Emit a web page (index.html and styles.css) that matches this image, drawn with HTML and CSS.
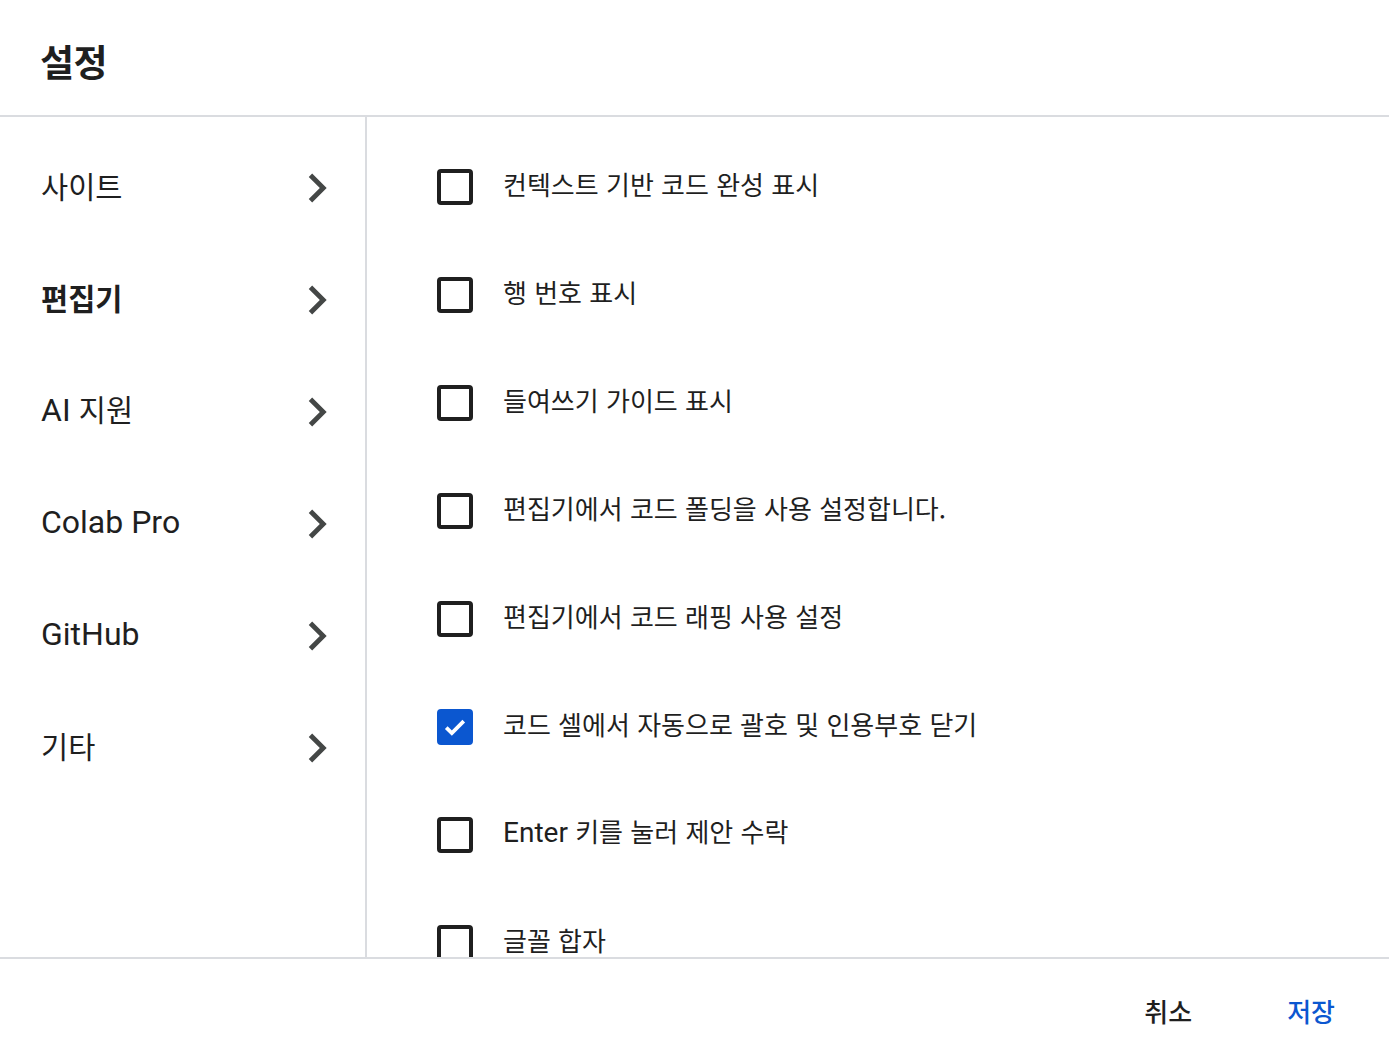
FILE: index.html
```html
<!DOCTYPE html>
<html lang="ko">
<head>
<meta charset="utf-8">
<title>설정</title>
<link rel="stylesheet" href="styles.css">
</head>
<body>
<div class="dialog">
  <header class="header"><h1 class="title">설정</h1></header>
  <div class="body">
    <nav class="sidebar">
      <div class="nav-item"><span class="nav-label">사이트</span><svg class="chev" viewBox="0 0 24 24"><path d="M10 6 8.59 7.41 13.17 12l-4.58 4.59L10 18l6-6z"/></svg></div>
      <div class="nav-item active"><span class="nav-label">편집기</span><svg class="chev" viewBox="0 0 24 24"><path d="M10 6 8.59 7.41 13.17 12l-4.58 4.59L10 18l6-6z"/></svg></div>
      <div class="nav-item"><span class="nav-label"><span class="en">AI</span> 지원</span><svg class="chev" viewBox="0 0 24 24"><path d="M10 6 8.59 7.41 13.17 12l-4.58 4.59L10 18l6-6z"/></svg></div>
      <div class="nav-item"><span class="nav-label"><span class="en">Colab Pro</span></span><svg class="chev" viewBox="0 0 24 24"><path d="M10 6 8.59 7.41 13.17 12l-4.58 4.59L10 18l6-6z"/></svg></div>
      <div class="nav-item"><span class="nav-label"><span class="en">GitHub</span></span><svg class="chev" viewBox="0 0 24 24"><path d="M10 6 8.59 7.41 13.17 12l-4.58 4.59L10 18l6-6z"/></svg></div>
      <div class="nav-item"><span class="nav-label">기타</span><svg class="chev" viewBox="0 0 24 24"><path d="M10 6 8.59 7.41 13.17 12l-4.58 4.59L10 18l6-6z"/></svg></div>
    </nav>
    <main class="content">
      <label class="opt"><span class="box"></span><span class="opt-label">컨텍스트 기반 코드 완성 표시</span></label>
      <label class="opt"><span class="box"></span><span class="opt-label">행 번호 표시</span></label>
      <label class="opt"><span class="box"></span><span class="opt-label">들여쓰기 가이드 표시</span></label>
      <label class="opt"><span class="box"></span><span class="opt-label">편집기에서 코드 폴딩을 사용 설정합니다.</span></label>
      <label class="opt"><span class="box"></span><span class="opt-label">편집기에서 코드 래핑 사용 설정</span></label>
      <label class="opt"><span class="box checked"><svg class="check" viewBox="0 0 24 24"><path d="M4.5 12.5l4.8 4.8L19.5 7"/></svg></span><span class="opt-label">코드 셀에서 자동으로 괄호 및 인용부호 닫기</span></label>
      <label class="opt"><span class="box"></span><span class="opt-label"><span class="en">Enter</span> 키를 눌러 제안 수락</span></label>
      <label class="opt"><span class="box"></span><span class="opt-label">글꼴 합자</span></label>
    </main>
  </div>
  <footer class="footer">
    <button class="btn cancel">취소</button>
    <button class="btn save">저장</button>
  </footer>
</div>
</body>
</html>
```
FILE: styles.css
```css
html, body {
  margin: 0;
  padding: 0;
  background: #fff;
}
body {
  font-family: "Roboto", "Noto Sans CJK KR", sans-serif;
  color: #1f1f1f;
}
.dialog {
  width: 1389px;
  height: 1062px;
  display: flex;
  flex-direction: column;
  overflow: hidden;
}
.header {
  height: 115px;
  flex: none;
  border-bottom: 2px solid #dadce0;
  display: flex;
  align-items: center;
  padding-left: 40px;
}
.title {
  margin: 0;
  padding-top: 8px;
  font-family: "Noto Sans CJK KR", sans-serif;
  font-size: 37px;
  font-weight: 700;
  line-height: 1;
  letter-spacing: -0.5px;
}
.body {
  flex: none;
  height: 840px;
  display: flex;
}
.sidebar {
  width: 365px;
  flex: none;
  border-right: 2px solid #dadce0;
  padding-top: 13px;
  box-sizing: content-box;
}
.nav-item {
  height: 112px;
  display: flex;
  align-items: center;
  justify-content: space-between;
  padding-left: 41px;
  padding-right: 19px;
}
.nav-label {
  font-family: "Noto Sans CJK KR", sans-serif;
  font-size: 29.5px;
  line-height: 1;
}
.nav-label .en {
  font-family: "Roboto", sans-serif;
  font-size: 32px;
}
.nav-item.active .nav-label {
  font-weight: 700;
}
.chev {
  width: 58px;
  height: 58px;
  fill: #444746;
  margin-top: 3px;
}
.content {
  flex: 1;
  padding-left: 70px;
  padding-top: 16px;
  overflow: hidden;
}
.opt {
  height: 108px;
  display: flex;
  align-items: center;
}
.box {
  width: 36px;
  height: 36px;
  box-sizing: border-box;
  border: 4px solid #1f1f1f;
  border-radius: 4px;
  flex: none;
  display: flex;
  align-items: center;
  justify-content: center;
}
.box.checked {
  background: #0b57d0;
  border-color: #0b57d0;
}
.check {
  width: 30px;
  height: 30px;
  fill: none;
  stroke: #fff;
  stroke-width: 3.2;
}
.opt-label {
  margin-left: 30px;
  font-family: "Noto Sans CJK KR", sans-serif;
  font-size: 26px;
  line-height: 1;
  margin-top: -6px;
}
.opt-label .en {
  font-family: "Roboto", sans-serif;
  font-size: 28px;
}
.footer {
  flex: 1;
  border-top: 2px solid #dadce0;
  display: flex;
  justify-content: flex-end;
  align-items: center;
  padding-right: 30px;
  gap: 47px;
}
.btn {
  background: none;
  border: none;
  padding: 8px 24px;
  font-family: "Noto Sans CJK KR", sans-serif;
  font-size: 26px;
  font-weight: 500;
  cursor: pointer;
}
.btn.cancel {
  color: #1f1f1f;
}
.btn.save {
  color: #0b57d0;
}
```
